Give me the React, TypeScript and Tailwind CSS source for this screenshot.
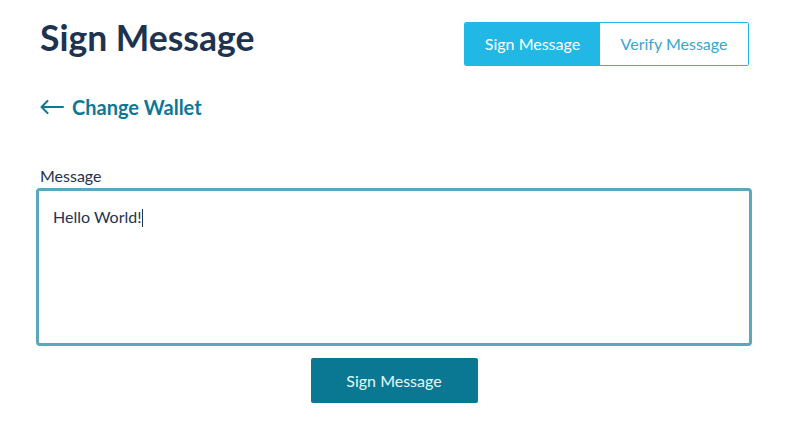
export default function App() {
  return (
    <div className="w-[791px] h-[427px] bg-white font-['Lato','Open_Sans',sans-serif] pl-[36px] pr-[39px] pt-[14px] relative overflow-hidden">
      <div className="flex items-start justify-between">
        <h1 className="ml-[4px] text-[35.5px] leading-[48px] font-bold text-[#1e3350]">Sign Message</h1>
        <div className="mt-[8px] mr-[3px] flex h-[44px] rounded-[2px] overflow-hidden border border-[#22b8e6]">
          <div className="w-[135px] bg-[#22b8e6] text-white text-[16px] flex items-center justify-center">Sign Message</div>
          <div className="w-[148px] bg-white text-[#3aa5cc] text-[16px] flex items-center justify-center">Verify Message</div>
        </div>
      </div>
      <div className="ml-[4px] mt-[28px] flex items-center gap-[8px] text-[#0d7896]">
        <svg width="24" height="14" viewBox="0 0 24 14" fill="none" stroke="currentColor" strokeWidth="2" strokeLinecap="round" strokeLinejoin="round">
          <path d="M23 7H1.5M7.5 1L1.5 7l6 6" />
        </svg>
        <span className="text-[20px] font-bold leading-[26px]">Change Wallet</span>
      </div>
      <div className="ml-[4px] mt-[46px] text-[16px] leading-[20px] text-[#1e3350]">Message</div>
      <div className="mt-[2px] h-[158px] rounded-[4px] border-[3px] border-[#5ba7bc] px-[14px] pt-[14px] text-[16px] text-[#1e3350]">
        Hello World!<span className="inline-block w-px h-[18px] bg-[#1e3350] align-[-4px]" />
      </div>
      <div className="flex justify-center mt-[12px]">
        <button className="w-[167px] h-[45px] rounded-[2px] bg-[#0a7893] text-[#e6f7fb] text-[16px]">Sign Message</button>
      </div>
    </div>
  );
}
